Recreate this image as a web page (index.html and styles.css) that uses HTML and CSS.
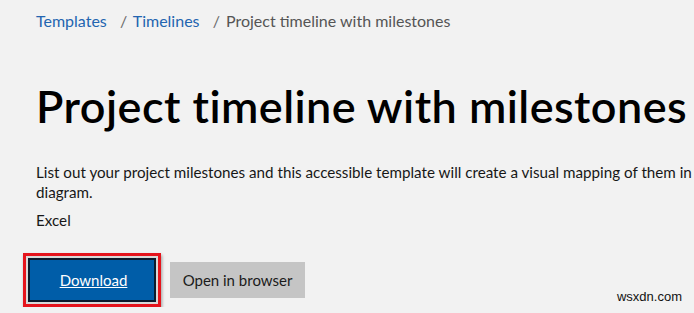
FILE: index.html
```html
<!DOCTYPE html>
<html lang="en">
<head>
    <meta charset="UTF-8">
    <meta name="viewport" content="width=device-width, initial-scale=1.0">
    <title>Project timeline with milestones</title>
    <link rel="stylesheet" href="styles.css">
</head>
<body>

<div class="page">
    <nav class="breadcrumb">
        <a href="#">Templates</a>
        <span class="sep">/</span>
        <a href="#">Timelines</a>
        <span class="sep">/</span>
        <span class="current">Project timeline with milestones</span>
    </nav>

    <h1 class="title">Project timeline with milestones</h1>

    <p class="desc">List out your project milestones and this accessible template will create a visual mapping of them in a timeline diagram.</p>
    <p class="app">Excel</p>

    <div class="actions">
        <span class="highlight">
            <a href="#" class="btn btn-primary">Download</a>
        </span>
        <a href="#" class="btn btn-secondary">Open in browser</a>
    </div>
</div>

<div class="watermark">wsxdn.com</div>

</body>
</html>
```

FILE: styles.css
```css
body {
    margin: 0;
    background-color: #f2f2f2;
    font-family: Lato, "Noto Sans", sans-serif;
    color: #171717;
    overflow: hidden;
}

.page {
    padding-left: 36px;
    width: 800px;
}

.breadcrumb {
    padding-top: 9px;
    font-size: 16px;
    line-height: 24px;
    white-space: nowrap;
}

.breadcrumb a {
    color: #2365b0;
    text-decoration: none;
}

.breadcrumb .sep {
    color: #6a6a6a;
    margin: 0 2px 0 9px;
}

.breadcrumb .current {
    color: #555;
}

.title {
    margin: 46px 0 0;
    font-size: 45px;
    font-weight: 600;
    line-height: 1.2;
    letter-spacing: 0.45px;
    color: #000;
    white-space: nowrap;
}

.desc {
    width: 765px;
    margin: 29px 0 0;
    font-size: 15.2px;
    line-height: 20px;
}

.app {
    margin: 8px 0 0;
    font-size: 15.2px;
    line-height: 20px;
}

.actions {
    display: flex;
    align-items: center;
    margin-top: 23px;
    margin-left: -13px;
}

.highlight {
    display: inline-block;
    border: 3px solid #e5141c;
    padding: 2px;
    background-color: #d9d9d9;
    box-shadow: 1px 2px 3px rgba(0, 0, 0, 0.35);
}

.btn {
    display: flex;
    align-items: center;
    justify-content: center;
    font-size: 15px;
    text-decoration: none;
    box-sizing: border-box;
}

.btn-primary {
    width: 128px;
    height: 44px;
    padding-left: 3px;
    background-color: #005da8;
    border: 2px solid #0c1b2c;
    color: #fff;
    text-decoration: underline;
}

.btn-secondary {
    width: 135px;
    height: 36px;
    margin-left: 9px;
    background-color: #c5c5c5;
    color: #1b1b1b;
}

.watermark {
    position: absolute;
    right: 12px;
    bottom: 9px;
    font-family: "Liberation Sans", Arial, sans-serif;
    font-size: 13px;
    color: #111;
}
```
